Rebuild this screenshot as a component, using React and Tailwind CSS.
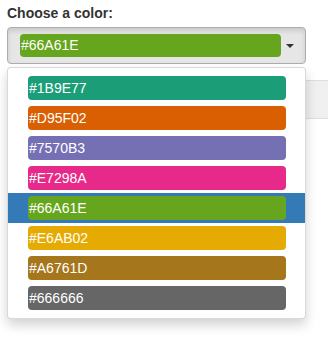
const colors = [
  "#1B9E77",
  "#D95F02",
  "#7570B3",
  "#E7298A",
  "#66A61E",
  "#E6AB02",
  "#A6761D",
  "#666666",
];

export default function App() {
  const selected = "#66A61E";

  return (
    <div className="relative w-[328px] h-[346px] overflow-hidden bg-white font-['Liberation_Sans',Arial,sans-serif] text-[14px] text-[#333]">
      <div className="pl-[7px] pt-[3px]">
        <label className="block font-bold leading-[20px]">Choose a color:</label>

        <div className="relative mt-[4px] w-[299px]">
          {/* select button */}
          <div className="flex items-center h-[37px] w-[299px] rounded-[4px] border border-[#adadad] bg-[#e6e6e6] pl-[12px] pr-[11px] shadow-[inset_0_3px_5px_rgba(0,0,0,0.125)]">
            <div
              className="flex-1 h-[23px] rounded-[4px] text-white leading-[23px] pl-[1px]"
              style={{ backgroundColor: selected }}
            >
              {selected}
            </div>
            <span className="ml-[5px] w-0 h-0 border-l-[4px] border-r-[4px] border-t-[4px] border-l-transparent border-r-transparent border-t-[#333]" />
          </div>

          {/* element behind menu */}
          <div className="mt-[16px] h-[39px] w-[330px] border border-[#ddd] bg-[#f0f0f0]" />

          {/* open menu */}
          <div className="absolute left-0 top-[40px] w-[299px] rounded-[4px] border border-[rgba(0,0,0,0.15)] bg-white py-[5px] shadow-[0_6px_12px_rgba(0,0,0,0.175)]">
            {colors.map((c) => (
              <div
                key={c}
                className={`flex items-center h-[30px] pl-[20px] pr-[19px] ${
                  c === selected ? "bg-[#337ab7]" : ""
                }`}
              >
                <div
                  className="w-full h-[24px] rounded-[4px] text-white leading-[24px] pl-[1px]"
                  style={{ backgroundColor: c }}
                >
                  {c}
                </div>
              </div>
            ))}
          </div>
        </div>
      </div>
    </div>
  );
}
